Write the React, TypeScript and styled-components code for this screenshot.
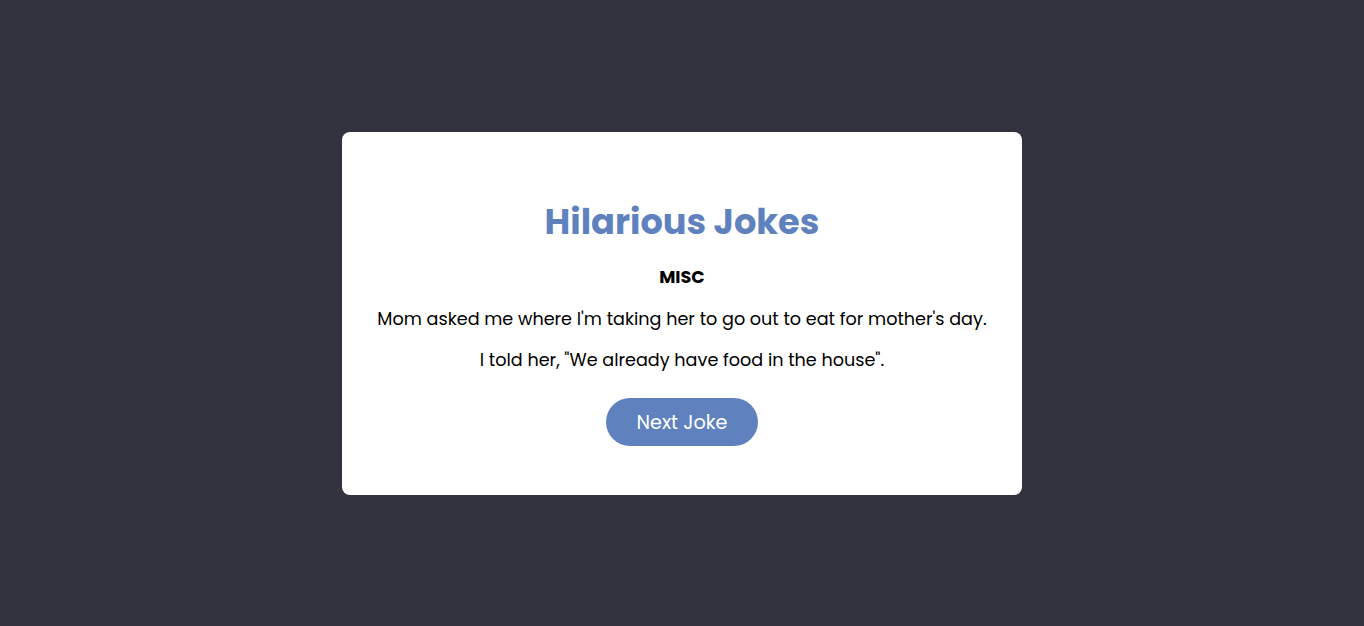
import React from "react";
import styled, { createGlobalStyle } from "styled-components";

const Global = createGlobalStyle`
  * { box-sizing: border-box; }
  html, body { margin: 0; padding: 0; }
  body {
    background: #32333f;
    font-family: "Poppins", "Open Sans", "Noto Sans", sans-serif;
  }
`;

const Page = styled.div`
  min-height: 100vh;
  display: flex;
  align-items: center;
  justify-content: center;
`;

const Card = styled.div`
  width: 680px;
  background: #ffffff;
  border-radius: 8px;
  padding: 50px 20px 49px;
  display: flex;
  flex-direction: column;
  align-items: center;
  text-align: center;
`;

const Title = styled.h1`
  margin: 13px 0 0;
  font-size: 35.2px;
  line-height: 54px;
  font-weight: 700;
  color: #5f82bf;
`;

const Category = styled.h3`
  margin: 16px 0 0;
  font-size: 17.6px;
  line-height: 24px;
  font-weight: 700;
  color: #000;
`;

const Line = styled.p<{ $gap: number }>`
  margin: ${(p) => p.$gap}px 0 0;
  font-size: 17.6px;
  line-height: 24px;
  color: #000;
`;

const Button = styled.button`
  margin-top: 26px;
  width: 152px;
  height: 48px;
  padding: 2px 0 0;
  border: none;
  border-radius: 24px;
  background: #5f82bf;
  color: #ffffff;
  font-family: inherit;
  font-size: 19.2px;
  cursor: pointer;
`;

export default function App() {
  return (
    <>
      <Global />
      <Page>
        <Card>
          <Title>Hilarious Jokes</Title>
          <Category>MISC</Category>
          <Line $gap={18}>Mom asked me where I'm taking her to go out to eat for mother's day.</Line>
          <Line $gap={17}>I told her, "We already have food in the house".</Line>
          <Button>Next Joke</Button>
        </Card>
      </Page>
    </>
  );
}
